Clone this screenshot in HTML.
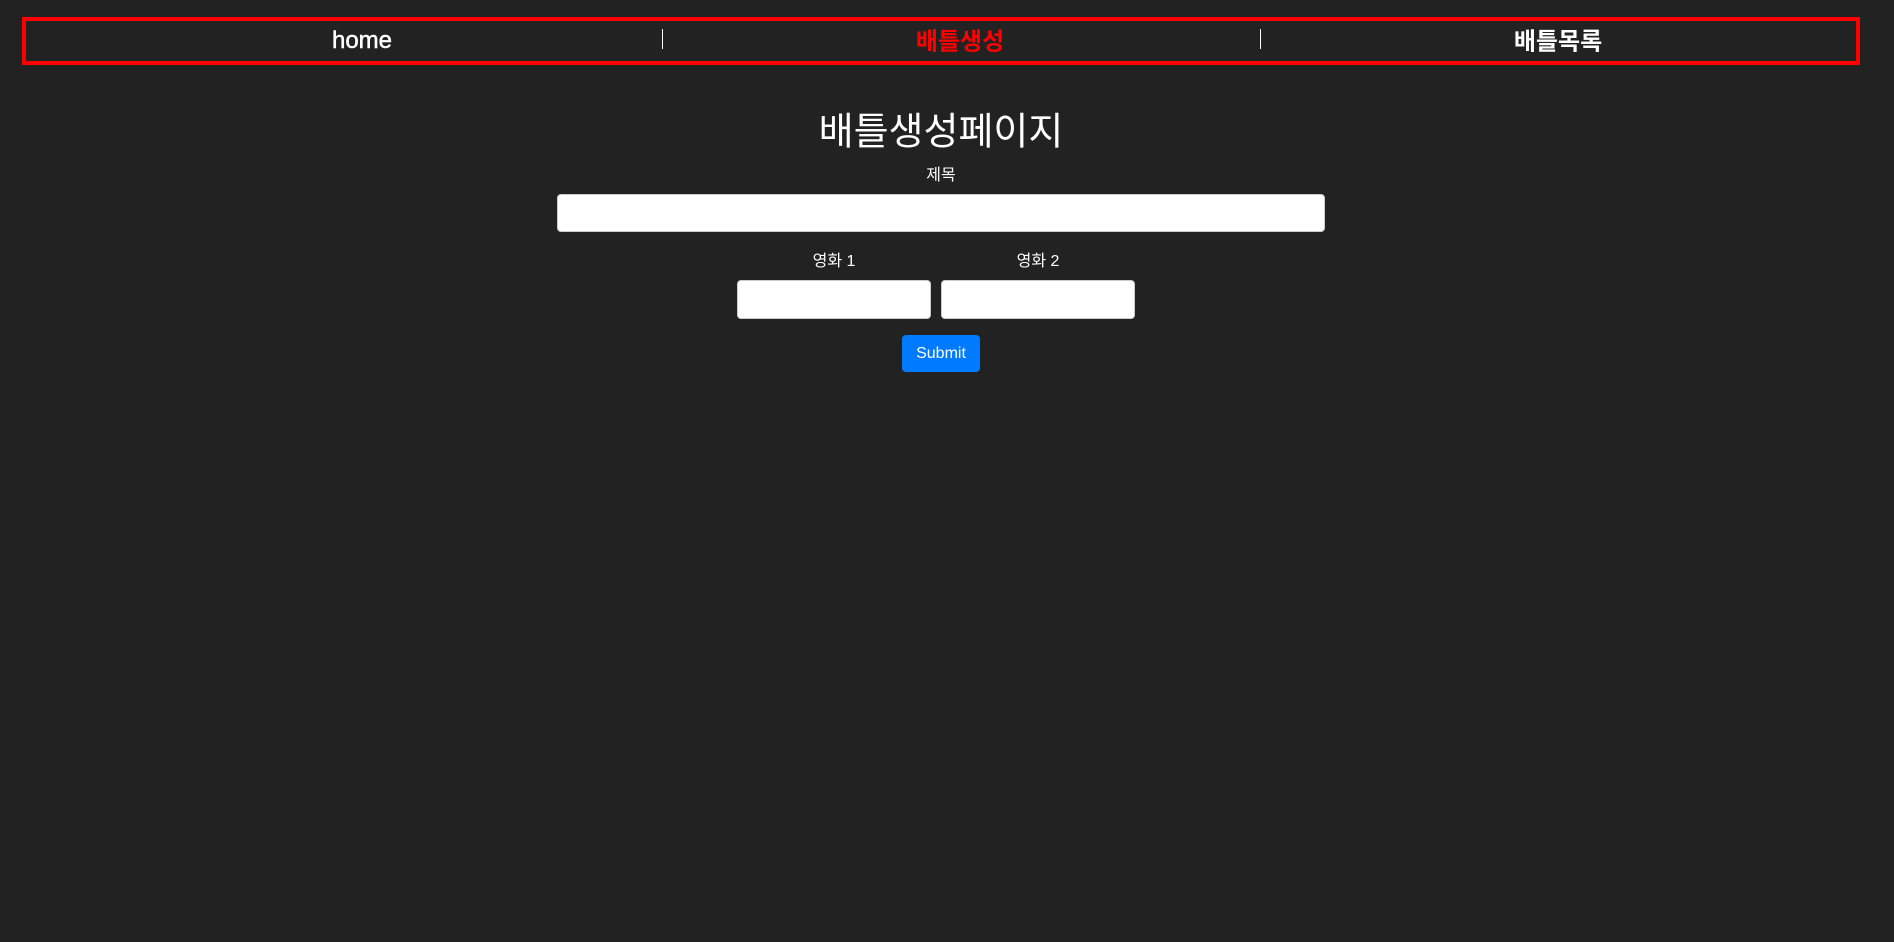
<!DOCTYPE html>
<html><head><meta charset="utf-8"><style>
body{margin:0;width:1894px;height:942px;background:#222;color:#fff;font-family:"Liberation Sans","Noto Sans CJK KR",sans-serif;position:relative;overflow:hidden}
.a{position:absolute}
.nav{left:22px;top:17px;width:1830px;height:40px;border:4px solid #f00}
.t{transform:translate(-50%,-50%);white-space:nowrap}
.sep{width:1px;height:20px;background:#fff;top:29px}
.in{background:#fff;border:1px solid #ccc;border-radius:4px;box-sizing:border-box}
</style></head><body>
<div class="a nav"></div>
<div class="a t" style="left:362px;top:41px;font-size:24px;font-weight:normal;-webkit-text-stroke:0.5px #fff">home</div>
<div class="a sep" style="left:662px"></div>
<div class="a t" style="left:960px;top:39px;font-size:24px;font-weight:bold;color:#f00">배틀생성</div>
<div class="a sep" style="left:1260px"></div>
<div class="a t" style="left:1558px;top:39px;font-size:24px;font-weight:bold">배틀목록</div>
<div class="a t" style="left:941px;top:128px;font-size:38px">배틀생성페이지</div>
<div class="a t" style="left:941px;top:173px;font-size:16px">제목</div>
<div class="a in" style="left:557px;top:194px;width:768px;height:38px"></div>
<div class="a t" style="left:834px;top:259px;font-size:16px">영화 1</div>
<div class="a t" style="left:1038px;top:259px;font-size:16px">영화 2</div>
<div class="a in" style="left:737px;top:280px;width:194px;height:39px"></div>
<div class="a in" style="left:941px;top:280px;width:194px;height:39px"></div>
<div class="a" style="left:902px;top:335px;width:78px;height:37px;background:#007bff;border-radius:4px;font-size:16px;line-height:37px;text-align:center">Submit</div>
</body></html>
